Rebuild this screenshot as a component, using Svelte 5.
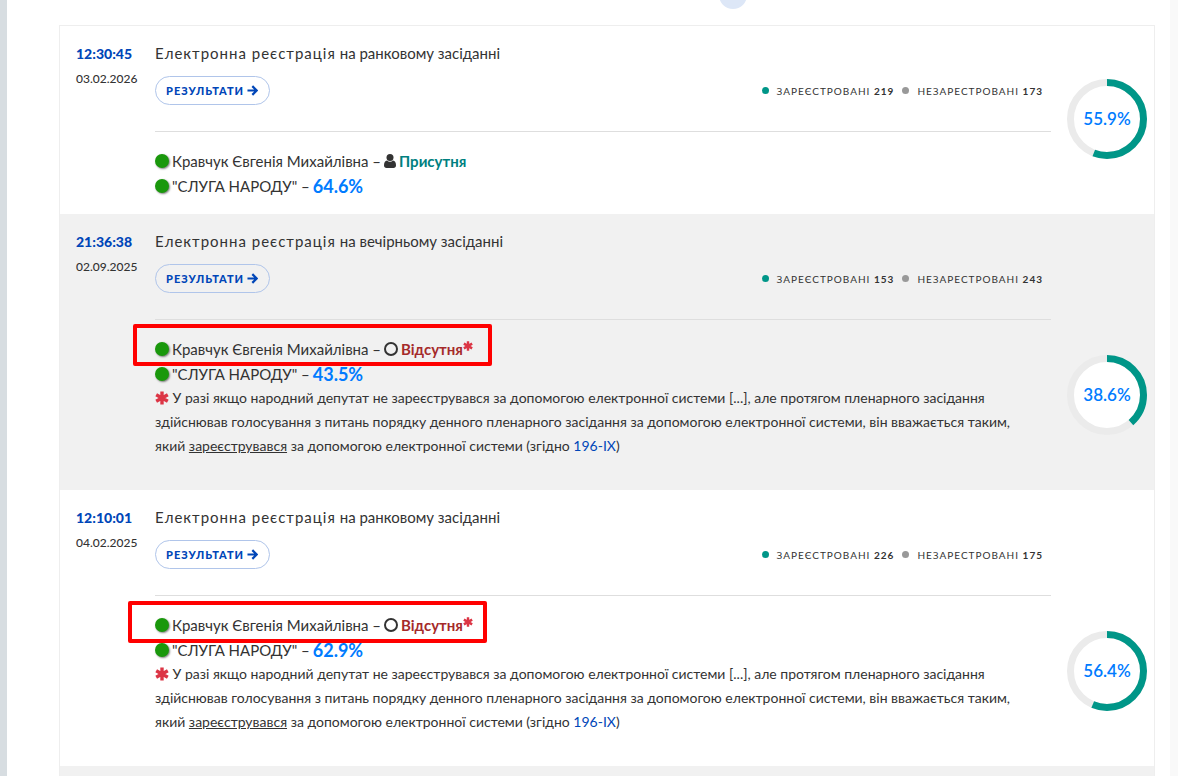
<script lang="ts">
	interface Session {
		id: number;
		time: string;
		date: string;
		part: string;
		registered: number;
		missing: number;
		percent: number;
		faction: number;
		present: boolean;
		mark?: 'first' | 'second';
	}

	const DEPUTY = 'Кравчук Євгенія Михайлівна';
	const FACTION = '"СЛУГА НАРОДУ"';

	const sessions: Session[] = [
		{ id: 1, time: '12:30:45', date: '03.02.2026', part: 'на ранковому засіданні', registered: 219, missing: 173, percent: 55.9, faction: 64.6, present: true },
		{ id: 2, time: '21:36:38', date: '02.09.2025', part: 'на вечірньому засіданні', registered: 153, missing: 243, percent: 38.6, faction: 43.5, present: false, mark: 'first' },
		{ id: 3, time: '12:10:01', date: '04.02.2025', part: 'на ранковому засіданні', registered: 226, missing: 175, percent: 56.4, faction: 62.9, present: false, mark: 'second' },
	];
</script>

{#snippet asterisk()}
	<svg class="asterisk" viewBox="0 0 14 14" aria-hidden="true">
		<path d="M7 0.5v13M1.2 3.7l11.6 6.6M1.2 10.3l11.6-6.6" />
	</svg>
{/snippet}

<div class="page">
	<main class="content">
		<button class="bubble" aria-label="Вгору"></button>
		<div class="list">
			{#each sessions as s (s.id)}
				<article class="row">
					<div class="when">
						<a class="time" href="#s{s.id}">{s.time}</a>
						<span class="date">{s.date}</span>
					</div>

					<div class="body">
						<div class="title"><span class="spaced">Електронна реєстрація</span> {s.part}</div>
						<div class="actions">
							<button class="results">
								Результати
								<svg class="arrow" viewBox="0 0 12 12" aria-hidden="true">
									<path d="M0.5 6h10M5.8 1.2l4.8 4.8-4.8 4.8" />
								</svg>
							</button>
							<div class="stats">
								<span class="dot on"></span>
								<span>Зареєстровані <b>{s.registered}</b></span>
								<span class="dot off"></span>
								<span>Незарестровані <b>{s.missing}</b></span>
							</div>
						</div>

						<div class="line">
							<span class="ball"></span>
							<span>{DEPUTY} –</span>
							{#if s.present}
								<svg class="person" viewBox="0 0 12 14" aria-hidden="true">
									<circle cx="6" cy="3.6" r="3.5" />
									<path d="M3 6.4C1 6.8 0 8.6 0 11.2 0 12.9 1 14 2.5 14h7c1.5 0 2.5-1.1 2.5-2.8 0-2.6-1-4.400-3-4.800a4.2 4.2 0 0 1-6 0z" />
								</svg>
								<b class="present">Присутня</b>
							{:else}
								<span class="ring"></span>
								<b class="absent">Відсутня<sup>{@render asterisk()}</sup></b>
							{/if}
							{#if s.mark}
								<span class="mark {s.mark}"></span>
							{/if}
						</div>
						<div class="line">
							<span class="ball"></span>
							<span>{FACTION} –</span>
							<b class="share">{s.faction}%</b>
						</div>

						{#if !s.present}
							<p class="note">
								{@render asterisk()} У разі якщо народний депутат не зареєструвався за допомогою електронної системи [...], але протягом пленарного засідання<br />
								здійснював голосування з питань порядку денного пленарного засідання за допомогою електронної системи, він вважається таким,<br />
								який <u>зареєструвався</u> за допомогою електронної системи (згідно <a href="#law">196-IX</a>)
							</p>
						{/if}
					</div>

					<svg class="chart" viewBox="0 0 80 80" role="img" aria-label="{s.percent}%">
						<circle class="track" cx="40" cy="40" r="36.5" />
						<circle class="value" cx="40" cy="40" r="36.5" pathLength="100" stroke-dasharray="{s.percent} 100" transform="rotate(-90 40 40)" />
						<text x="40" y="46">{s.percent}%</text>
					</svg>
				</article>
			{/each}
			<div class="next"></div>
		</div>
	</main>
</div>

<style>
	:global(body) {
		background: #f9f9f9;
		font-family: Lato, 'Open Sans', sans-serif;
		color: #333;
	}
	.page {
		display: flex;
		min-height: 100vh;
		box-sizing: border-box;
		padding-right: 8px;
		border-left: 7px solid #d7dde1;
	}
	.content {
		position: relative;
		flex: 1;
		display: flex;
		padding: 25px 15px 0 52px;
		background: #fff;
	}
	.bubble {
		position: absolute;
		top: -19px;
		left: 712px;
		width: 28px;
		height: 28px;
		padding: 0;
		border: none;
		border-radius: 50%;
		background: #dde7f7;
	}
	.list {
		flex: 1;
		display: flex;
		flex-direction: column;
		border: 1px solid #eee;
		border-bottom: none;
	}
	.row {
		display: flex;
		padding: 15px 7px 16px 16px;
	}
	.row:nth-child(even),
	.next {
		background: #f1f1f1;
	}
	.next {
		flex: 1;
	}

	a {
		color: #0046b8;
		text-decoration: none;
	}
	.when {
		display: flex;
		flex-direction: column;
		flex: none;
		width: 79px;
		line-height: 25px;
	}
	.time {
		font-size: 14px;
		font-weight: 900;
	}
	.date {
		font-size: 12px;
		font-weight: 500;
	}

	.body {
		flex: 1;
		min-width: 0;
	}
	.title {
		font-size: 15px;
		line-height: 24px;
	}
	.spaced {
		letter-spacing: 1px;
	}
	.actions {
		display: flex;
		align-items: center;
		justify-content: space-between;
		margin-bottom: 16px;
		padding: 11px 8px 26px 0;
		border-bottom: 1px solid #dedede;
	}
	.results {
		display: flex;
		align-items: center;
		gap: 3px;
		height: 29px;
		padding: 0 11px 0 10px;
		border: 1px solid #b0c5ea;
		border-radius: 15px;
		background: none;
		color: #0046b8;
		font-family: inherit;
		font-size: 11px;
		font-weight: 900;
		letter-spacing: 1px;
		text-transform: uppercase;
		cursor: pointer;
	}
	.arrow {
		width: 11px;
		height: 11px;
		fill: none;
		stroke: currentColor;
		stroke-width: 2.4;
	}
	.stats {
		display: flex;
		align-items: center;
		gap: 8px;
		font-size: 10px;
		letter-spacing: 1px;
		text-transform: uppercase;
	}
	.dot {
		width: 7px;
		height: 7px;
		border-radius: 50%;
	}
	.on { background: #009688; }
	.off { background: #999; }

	.line {
		position: relative;
		display: flex;
		align-items: center;
		gap: 3px;
		height: 25px;
		font-size: 15px;
	}
	.ball {
		width: 14px;
		height: 14px;
		border-radius: 50%;
		background: #1a980c;
		box-shadow: 1px 1px 2px rgba(0, 0, 0, 0.5);
	}
	.person {
		width: 12px;
		height: 14px;
		fill: #333;
	}
	.ring {
		box-sizing: border-box;
		width: 14px;
		height: 14px;
		border: 2px solid #333;
		border-radius: 50%;
	}
	.present { color: #008080; }
	.absent { color: #a52a2a; }
	.share {
		color: #007bff;
		font-size: 18px;
	}
	.asterisk {
		width: 14px;
		height: 14px;
		vertical-align: -2px;
		fill: none;
		stroke: #dc3545;
		stroke-width: 3.4;
	}
	sup {
		line-height: 0;
	}
	sup .asterisk {
		width: 10px;
		height: 10px;
	}
	/* hand-drawn highlight over the deputy's line */
	.mark {
		position: absolute;
		box-sizing: border-box;
		width: 359px;
		height: 42px;
		border: 4px solid #f00;
		border-radius: 2px;
	}
	.first {
		top: -12px;
		left: -22px;
	}
	.second {
		top: -11px;
		left: -27px;
	}
	.note {
		margin: 0 0 16px;
		font-size: 14px;
		line-height: 24px;
	}

	.chart {
		flex: none;
		align-self: flex-end;
		width: 80px;
		height: 80px;
		margin: 0 0 39px 16px;
	}
	.chart circle {
		fill: #fff;
		stroke-width: 7;
	}
	.chart .track { stroke: #ebebeb; }
	.chart .value {
		fill: none;
		stroke: #009688;
	}
	.chart text {
		fill: #007bff;
		font-size: 17px;
		font-weight: 600;
		text-anchor: middle;
	}
</style>
